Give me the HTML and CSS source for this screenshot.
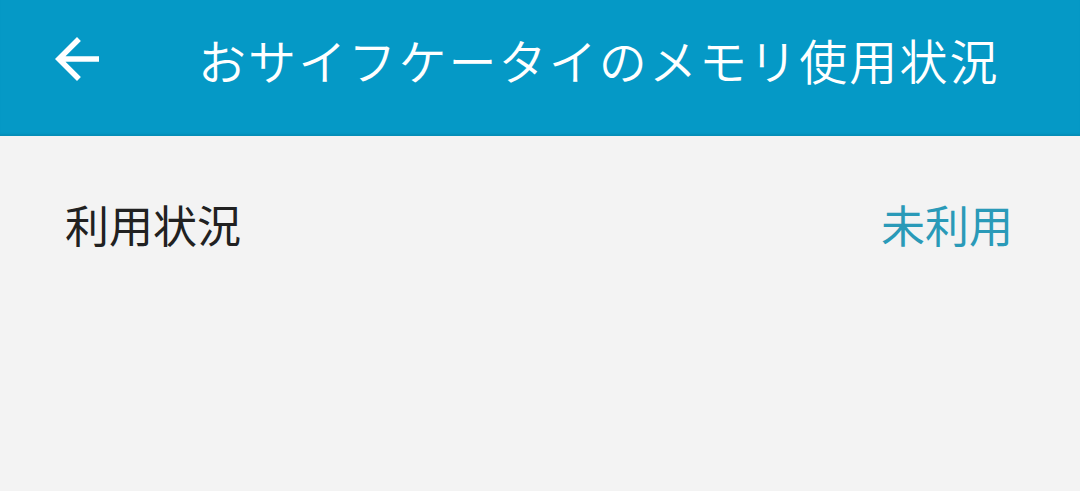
FILE: index.html
```html
<!DOCTYPE html>
<html lang="ja">
<head>
<meta charset="utf-8">
<link rel="stylesheet" href="styles.css">
</head>
<body>
<header class="appbar">
  <div class="back">
    <svg viewBox="0 0 24 24" width="66" height="66"><path fill="#fff" d="M20 11H7.83l5.59-5.59L12 4l-8 8 8 8 1.41-1.41L7.83 13H20v-2z"/></svg>
  </div>
  <h1 class="title">おサイフケータイのメモリ使用状況</h1>
</header>
<main class="content">
  <div class="row">
    <span class="label">利用状況</span>
    <span class="value">未利用</span>
  </div>
</main>
</body>
</html>
```
FILE: styles.css
```css
html, body {
  margin: 0;
  padding: 0;
  height: 100%;
  background: #f3f3f3;
  font-family: "Noto Sans CJK JP", "Noto Sans", sans-serif;
}
.appbar {
  height: 136px;
  box-sizing: border-box;
  padding-top: 26px;
  background: #0599c6;
  display: flex;
  align-items: flex-start;
  box-shadow: inset 0 -3px 2px -1px rgba(0,0,0,0.08);
}
.back {
  width: 66px;
  height: 66px;
  margin-left: 44px;
  display: flex;
}
.title {
  margin: 9px 0 0 88px;
  font-size: 48px;
  font-weight: 350;
  color: #fff;
  line-height: 1;
  letter-spacing: 2.1px;
}
.row {
  display: flex;
  justify-content: space-between;
  align-items: center;
  padding: 0 67px 0 65px;
  margin-top: 63px;
  height: 50px;
  font-size: 44px;
  line-height: 1;
}
.label {
  color: #212121;
}
.value {
  color: #2a9ab8;
}
```
